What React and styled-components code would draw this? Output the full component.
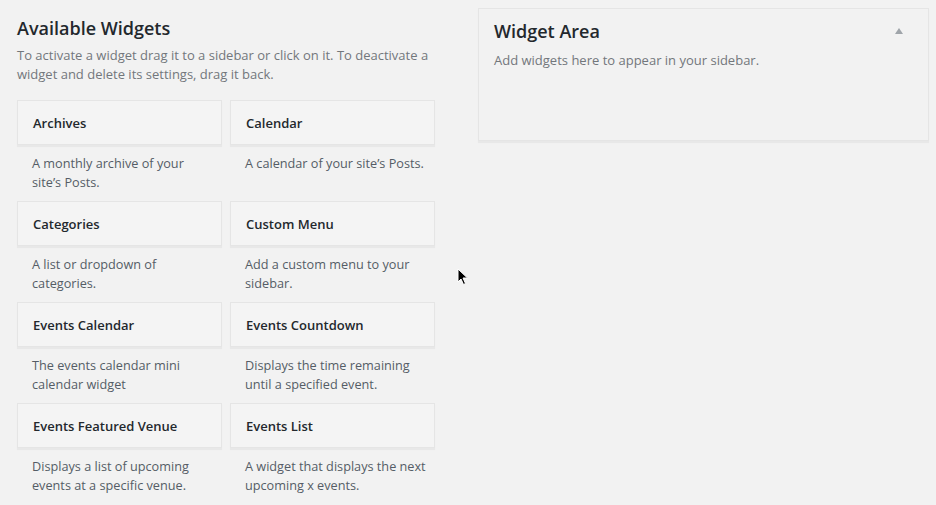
import styled, { createGlobalStyle } from 'styled-components';

const GlobalStyle = createGlobalStyle`
  html, body {
    margin: 0;
    padding: 0;
    background: #f2f2f2;
    overflow: hidden;
  }
  body {
    font-family: "Open Sans", "Liberation Sans", sans-serif;
    color: #444;
    -webkit-font-smoothing: antialiased;
  }
`;

const Page = styled.div`
  position: relative;
  display: flex;
  align-items: flex-start;
  gap: 43px;
  padding: 8px 0 0 17px;
  width: 936px;
  height: 505px;
  box-sizing: border-box;
  overflow: hidden;
`;

const Available = styled.section`
  width: 418px;
  flex-shrink: 0;
`;

const Heading = styled.h2`
  margin: 8px 0 0;
  font-size: 18px;
  font-weight: 600;
  line-height: 24px;
  color: #23282d;
`;

const Intro = styled.p`
  margin: 6px 0 16px;
  font-size: 13px;
  line-height: 19px;
  color: #72777c;
`;

const Grid = styled.div`
  display: grid;
  grid-template-columns: 205px 205px;
  column-gap: 8px;
`;

const Widget = styled.div`
  height: 101px;
`;

const WidgetTop = styled.div`
  height: 43px;
  border: 1px solid #e5e5e5;
  box-shadow: 0 2px 1px rgba(0, 0, 0, 0.04);
  background: #f4f4f4;
  display: flex;
  align-items: center;
  padding: 0 15px;
`;

const WidgetTitle = styled.h3`
  margin: 0;
  font-size: 13px;
  font-weight: 600;
  color: #23282d;
`;

const WidgetDesc = styled.p`
  margin: 0;
  padding: 9px 6px 0 15px;
  font-size: 12.7px;
  line-height: 19px;
  color: #555d66;
`;

const Sidebar = styled.section`
  width: 451px;
  height: 133px;
  box-sizing: border-box;
  border: 1px solid #e5e5e5;
  box-shadow: 0 2px 1px rgba(0, 0, 0, 0.04);
  padding: 10px 15px 0;
`;

const SidebarHead = styled.div`
  display: flex;
  justify-content: space-between;
  align-items: center;
`;

const SidebarTitle = styled.h2`
  margin: 0;
  font-size: 18px;
  font-weight: 600;
  line-height: 24px;
  color: #23282d;
`;

const Toggle = styled.span`
  width: 0;
  height: 0;
  margin-right: 10px;
  border-left: 4px solid transparent;
  border-right: 4px solid transparent;
  border-bottom: 6px solid #a0a5aa;
`;

const SidebarDesc = styled.p`
  margin: 8px 0 0;
  font-size: 13px;
  line-height: 19px;
  color: #72777c;
`;

const Cursor = styled.svg`
  position: absolute;
  left: 457px;
  top: 268px;
`;

const widgets = [
  ['Archives', 'A monthly archive of your site\u2019s Posts.'],
  ['Calendar', 'A calendar of your site\u2019s Posts.'],
  ['Categories', 'A list or dropdown of categories.'],
  ['Custom Menu', 'Add a custom menu to your sidebar.'],
  ['Events Calendar', 'The events calendar mini calendar widget'],
  ['Events Countdown', 'Displays the time remaining until a specified event.'],
  ['Events Featured Venue', 'Displays a list of upcoming events at a specific venue.'],
  ['Events List', 'A widget that displays the next upcoming x events.'],
];

export default function App() {
  return (
    <Page>
      <GlobalStyle />
      <Available>
        <Heading>Available Widgets</Heading>
        <Intro>
          To activate a widget drag it to a sidebar or click on it. To deactivate a widget and
          delete its settings, drag it back.
        </Intro>
        <Grid>
          {widgets.map(([title, desc]) => (
            <Widget key={title}>
              <WidgetTop>
                <WidgetTitle>{title}</WidgetTitle>
              </WidgetTop>
              <WidgetDesc>{desc}</WidgetDesc>
            </Widget>
          ))}
        </Grid>
      </Available>
      <Sidebar>
        <SidebarHead>
          <SidebarTitle>Widget Area</SidebarTitle>
          <Toggle />
        </SidebarHead>
        <SidebarDesc>Add widgets here to appear in your sidebar.</SidebarDesc>
      </Sidebar>
      <Cursor width="12" height="18" viewBox="0 0 12 18">
        <path d="M1 1 L1 14 L4 11 L6.5 16.5 L8.5 15.5 L6 10 L10.5 10 Z" fill="#000" stroke="#fff" strokeWidth="1" />
      </Cursor>
    </Page>
  );
}
